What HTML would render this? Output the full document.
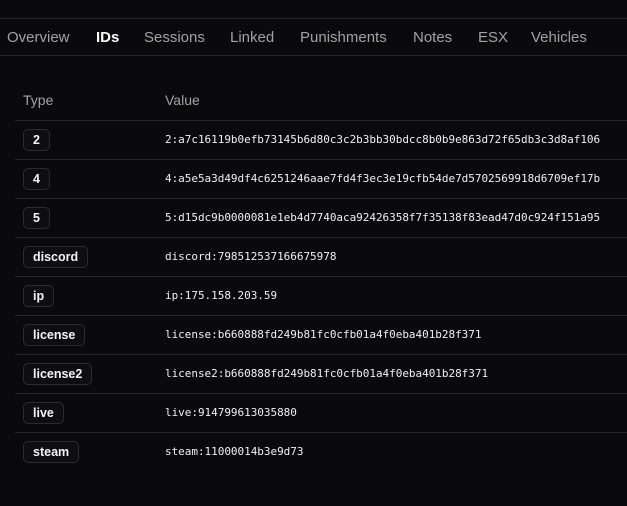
<!DOCTYPE html>
<html><head><style>
body{margin:0;width:627px;height:506px;background:#0a0a0c;overflow:hidden;font-family:"Liberation Sans",sans-serif;position:relative}
.hl{position:absolute;height:1px;background:#26262a}
.tab{position:absolute;top:29px;font-size:15px;color:#a1a1aa;white-space:nowrap}
.th{position:absolute;top:92px;font-size:14px;color:#a1a1aa}
.b{position:absolute;left:23px;height:20px;line-height:20px;padding:0 9px;border:1px solid #2c2c30;border-radius:5px;font-size:12.5px;font-weight:bold;color:#f4f4f5;background:#0e0e10}
.v{position:absolute;left:165px;font-family:"DejaVu Sans Mono","Liberation Mono",monospace;font-size:11px;letter-spacing:-0.03px;color:#f0f0f0;white-space:nowrap}
</style></head><body>
<div class="hl" style="left:0;right:0;top:18px"></div>
<div class="hl" style="left:0;right:0;top:55px"></div>
<div class="tab" style="left:7px">Overview</div>
<div class="tab" style="left:96px;color:#fafafa;font-weight:bold">IDs</div>
<div class="tab" style="left:144px">Sessions</div>
<div class="tab" style="left:230px">Linked</div>
<div class="tab" style="left:300px">Punishments</div>
<div class="tab" style="left:413px">Notes</div>
<div class="tab" style="left:478px">ESX</div>
<div class="tab" style="left:531px">Vehicles</div>
<div class="th" style="left:23px">Type</div>
<div class="th" style="left:165px">Value</div>
<div class="hl" style="left:15px;right:0;top:120px"></div>
<div class="hl" style="left:15px;right:0;top:159px"></div>
<div class="hl" style="left:15px;right:0;top:198px"></div>
<div class="hl" style="left:15px;right:0;top:237px"></div>
<div class="hl" style="left:15px;right:0;top:276px"></div>
<div class="hl" style="left:15px;right:0;top:315px"></div>
<div class="hl" style="left:15px;right:0;top:354px"></div>
<div class="hl" style="left:15px;right:0;top:393px"></div>
<div class="hl" style="left:15px;right:0;top:432px"></div>

<div class="b" style="top:129px">2</div><div class="v" style="top:133px">2:a7c16119b0efb73145b6d80c3c2b3bb30bdcc8b0b9e863d72f65db3c3d8af106</div>
<div class="b" style="top:168px">4</div><div class="v" style="top:172px">4:a5e5a3d49df4c6251246aae7fd4f3ec3e19cfb54de7d5702569918d6709ef17b</div>
<div class="b" style="top:207px">5</div><div class="v" style="top:211px">5:d15dc9b0000081e1eb4d7740aca92426358f7f35138f83ead47d0c924f151a95</div>
<div class="b" style="top:246px">discord</div><div class="v" style="top:250px">discord:798512537166675978</div>
<div class="b" style="top:285px">ip</div><div class="v" style="top:289px">ip:175.158.203.59</div>
<div class="b" style="top:324px">license</div><div class="v" style="top:328px">license:b660888fd249b81fc0cfb01a4f0eba401b28f371</div>
<div class="b" style="top:363px">license2</div><div class="v" style="top:367px">license2:b660888fd249b81fc0cfb01a4f0eba401b28f371</div>
<div class="b" style="top:402px">live</div><div class="v" style="top:406px">live:914799613035880</div>
<div class="b" style="top:441px">steam</div><div class="v" style="top:445px">steam:11000014b3e9d73</div>
</body></html>
